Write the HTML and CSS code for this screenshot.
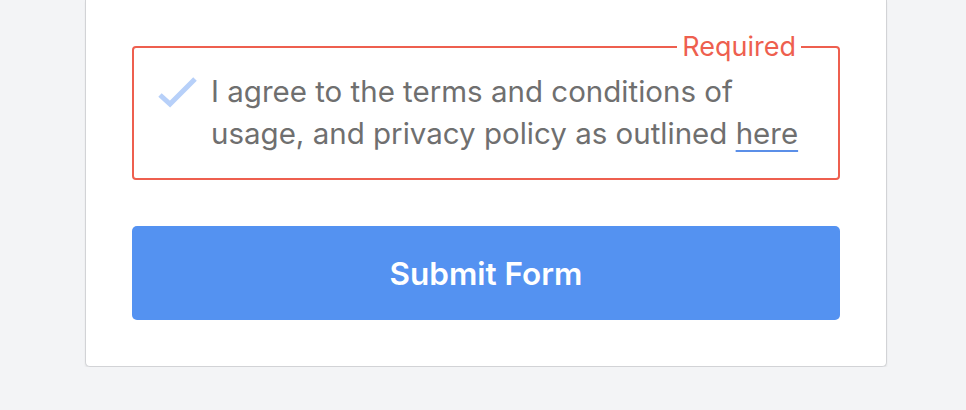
FILE: index.html
```html
<!DOCTYPE html>
<html lang="en">
<head>
    <meta charset="UTF-8">
    <meta name="viewport" content="width=device-width, initial-scale=1.0">
    <title>Form</title>
    <link rel="stylesheet" href="styles.css">
</head>
<body>
    <div class="card">
        <fieldset class="agree">
            <legend>Required</legend>
            <label class="agree-row">
                <svg class="check" width="44" height="36" viewBox="0 0 44 36">
                    <polyline points="3,21 13,30 38,5" fill="none" stroke="#b7d0f9" stroke-width="5" stroke-linejoin="miter"/>
                </svg>
                <span class="agree-text">I agree to the terms and conditions of usage, and privacy policy as outlined <a href="#">here</a></span>
            </label>
        </fieldset>
        <button type="submit">Submit Form</button>
    </div>
</body>
</html>
```

FILE: styles.css
```css
body {
    margin: 0;
    padding-left: 6px;
    background-color: #f3f4f6;
    font-family: Inter, "Noto Sans", sans-serif;
}
.card {
    width: 708px;
    margin: 0 auto;
    padding: 31px 46px 46px;
    background-color: #fff;
    border: 1px solid #d2d3d6;
    border-top: none;
    border-radius: 0 0 5px 5px;
    box-shadow: 0 2px 2px rgba(0, 0, 0, 0.07);
}
.agree {
    margin: 0;
    padding: 7px 24px 24px 23px;
    border: 2px solid #ee5f4f;
    border-radius: 4px;
}
.agree legend {
    margin-left: auto;
    margin-right: 13px;
    padding: 0 5px;
    color: #ee5f4f;
    font-size: 27px;
    line-height: 32px;
}
.agree-row {
    display: flex;
    align-items: flex-start;
    gap: 10px;
}
.check {
    flex-shrink: 0;
    margin-top: 4px;
}
.agree-text {
    color: #6f6f6f;
    font-size: 29.5px;
    line-height: 42px;
}
.agree-text a {
    color: #6f6f6f;
    text-decoration: underline solid #5b8fe8 2px;
    text-underline-offset: 6px;
}
button {
    display: block;
    width: 100%;
    height: 94px;
    margin-top: 46px;
    background-color: #5492f1;
    color: #fff;
    font-family: inherit;
    font-size: 31.5px;
    font-weight: 600;
    border: none;
    border-radius: 5px;
    cursor: pointer;
}
```
